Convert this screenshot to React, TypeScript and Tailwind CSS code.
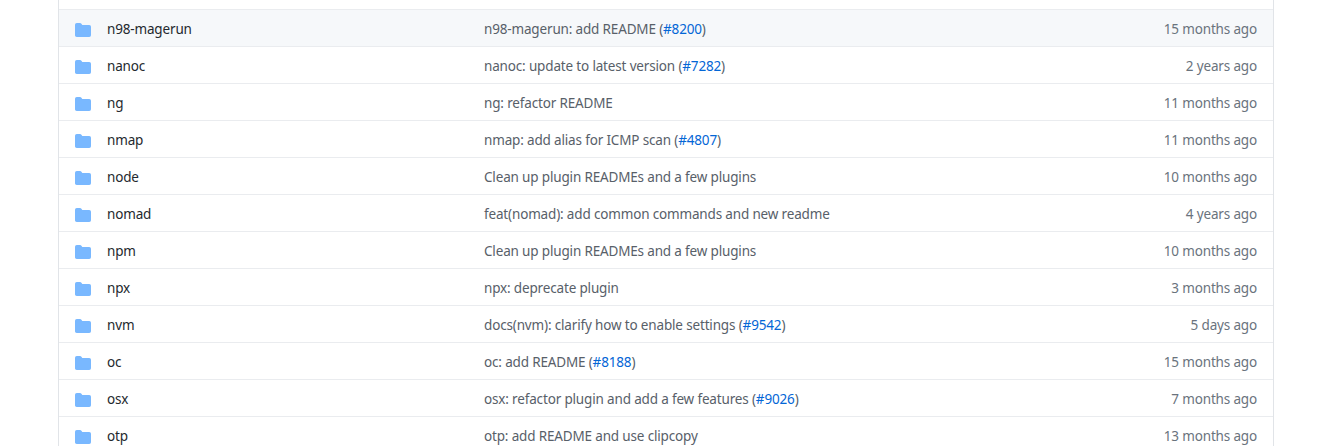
// App.tsx
interface Fila {
  nombre: string;
  mensaje: string;
  pr?: string;
  fecha: string;
}

const FILAS: Fila[] = [
  { nombre: "n98-magerun", mensaje: "n98-magerun: add README", pr: "#8200", fecha: "15 months ago" },
  { nombre: "nanoc", mensaje: "nanoc: update to latest version", pr: "#7282", fecha: "2 years ago" },
  { nombre: "ng", mensaje: "ng: refactor README", fecha: "11 months ago" },
  { nombre: "nmap", mensaje: "nmap: add alias for ICMP scan", pr: "#4807", fecha: "11 months ago" },
  { nombre: "node", mensaje: "Clean up plugin READMEs and a few plugins", fecha: "10 months ago" },
  { nombre: "nomad", mensaje: "feat(nomad): add common commands and new readme", fecha: "4 years ago" },
  { nombre: "npm", mensaje: "Clean up plugin READMEs and a few plugins", fecha: "10 months ago" },
  { nombre: "npx", mensaje: "npx: deprecate plugin", fecha: "3 months ago" },
  { nombre: "nvm", mensaje: "docs(nvm): clarify how to enable settings", pr: "#9542", fecha: "5 days ago" },
  { nombre: "oc", mensaje: "oc: add README", pr: "#8188", fecha: "15 months ago" },
  { nombre: "osx", mensaje: "osx: refactor plugin and add a few features", pr: "#9026", fecha: "7 months ago" },
  { nombre: "otp", mensaje: "otp: add README and use clipcopy", fecha: "13 months ago" },
];

function Carpeta() {
  return (
    <svg viewBox="0 0 16 16" className="w-4 h-4 mt-[2px] shrink-0 fill-[#79b8ff]">
      <path d="M1.75 1A1.75 1.75 0 000 2.75v10.5C0 14.216.784 15 1.75 15h12.5A1.75 1.75 0 0016 13.25v-8.5A1.75 1.75 0 0014.25 3H7.5a.25.25 0 01-.2-.1l-.9-1.2C6.07 1.26 5.55 1 5 1H1.75z" />
    </svg>
  );
}

export default function App() {
  return (
    <div className="h-[446px] overflow-hidden bg-white pl-[58px] pr-[59px] font-['Noto_Sans',sans-serif] text-[13.5px] tracking-[-0.16px] leading-5">
      <div className="border-x border-[#e1e4e8]">
        {/* Fila anterior, cortada por el borde de la captura */}
        <div className="h-[10px] border-b border-[#eaecef]" />
        {FILAS.map((fila, i) => (
          <div
            key={fila.nombre}
            className={`flex items-center h-[37px] px-4 pt-[2px] border-b border-[#eaecef] ${i === 0 ? "bg-[#f6f8fa]" : ""}`}
          >
            <Carpeta />
            <span className="ml-4 w-[377px] shrink-0 text-[#24292e]">{fila.nombre}</span>
            <span className="flex-1 text-[#586069]">
              {fila.mensaje}
              {fila.pr && (
                <>
                  {" ("}
                  <a className="text-[#0366d6]">{fila.pr}</a>
                  {")"}
                </>
              )}
            </span>
            <span className="text-[#6a737d]">{fila.fecha}</span>
          </div>
        ))}
      </div>
    </div>
  );
}
